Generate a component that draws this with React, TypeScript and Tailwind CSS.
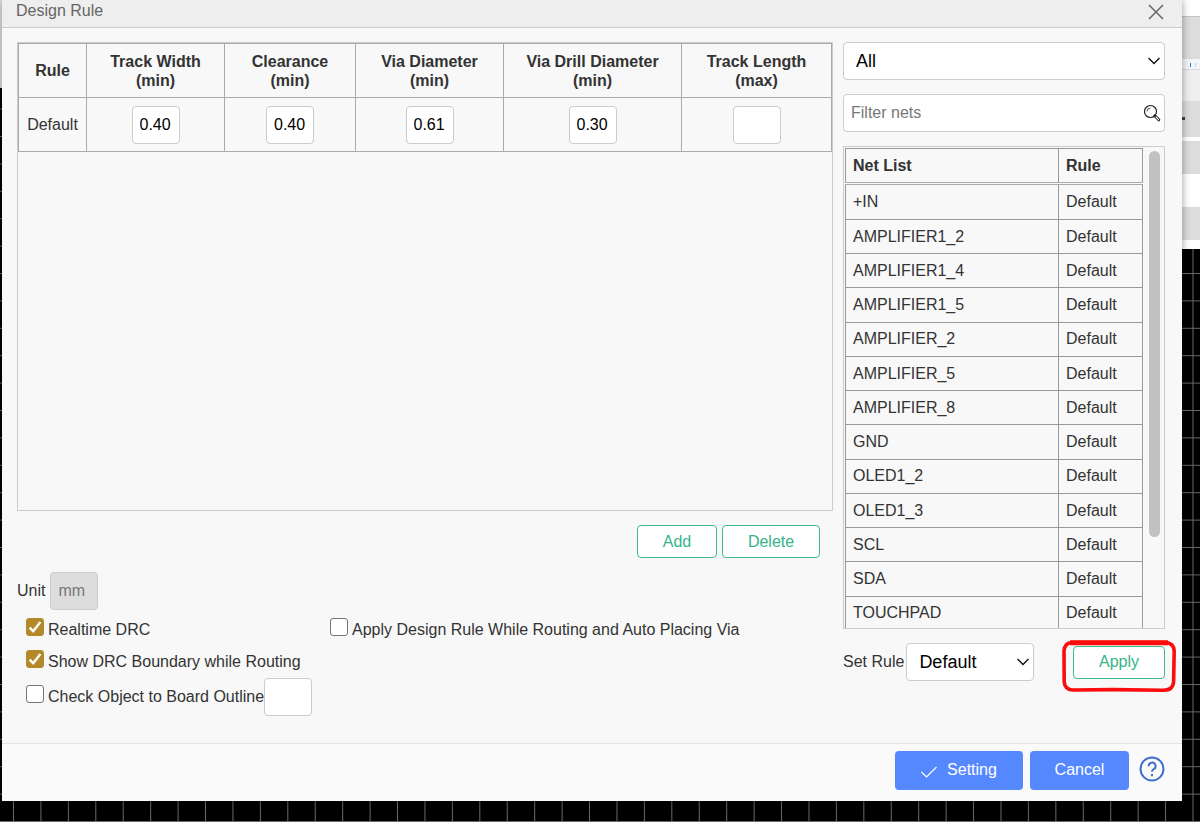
import { ComponentProps, useState } from "react";
import { clsx } from "clsx";

const columns = [
	{ title: "Track Width", bound: "min", value: "0.40" },
	{ title: "Clearance", bound: "min", value: "0.40" },
	{ title: "Via Diameter", bound: "min", value: "0.61" },
	{ title: "Via Drill Diameter", bound: "min", value: "0.30" },
	{ title: "Track Length", bound: "max", value: "" },
];

const nets = [
	"+IN",
	"AMPLIFIER1_2",
	"AMPLIFIER1_4",
	"AMPLIFIER1_5",
	"AMPLIFIER_2",
	"AMPLIFIER_5",
	"AMPLIFIER_8",
	"GND",
	"OLED1_2",
	"OLED1_3",
	"SCL",
	"SDA",
	"TOUCHPAD",
];

function Backdrop() {
	return (
		<div
			aria-hidden="true"
			className="absolute inset-0 overflow-hidden bg-black"
		>
			<svg className="size-full" stroke="#6a6a6a" strokeWidth="1">
				<defs>
					<pattern
						id="grid"
						x="13"
						y="-1"
						width="27.43"
						height="27.4"
						patternUnits="userSpaceOnUse"
					>
						<path d="M0.5 0v27.4M0 0.5h27.43" fill="none" />
					</pattern>
				</defs>
				<rect width="100%" height="100%" fill="url(#grid)" stroke="none" />
			</svg>
			<div className="absolute top-0 left-0 h-[88px] w-1 bg-[#e4e4e4]" />
			<div className="absolute top-0 right-0 flex h-[249px] w-6 flex-col bg-white pt-4">
				<div className="h-[43px] border-t border-[#c4c4c4] bg-[#dcdcdc]" />
				<div className="flex h-[11px] justify-end gap-1 border-b border-[#d5dbe2] bg-[#f4f6f9] pt-1 pr-1">
					<span className="h-1 w-px bg-[#2f7fc4]" />
					<span className="h-1 w-px bg-[#c3d5e6]" />
				</div>
				<div className="h-[31px] bg-[#efefef]" />
				<div className="h-9 bg-[#dcdcdc] pt-4 pl-1.5">
					<span className="block h-[3px] w-[3px] bg-[#444]" />
				</div>
				<div className="mt-1 h-[33px] bg-[#dcdcdc]" />
				<div className="mt-[33px] h-[33px] bg-[#dcdcdc]" />
			</div>
		</div>
	);
}

function TextBox({ className, ...props }: ComponentProps<"input">) {
	return (
		<input
			type="text"
			className={clsx(
				"h-[38px] rounded-[4px] border border-[#ccc] px-[7px] outline-none",
				className
			)}
			{...props}
		/>
	);
}

function Dropdown({
	options,
	className,
	...props
}: ComponentProps<"select"> & { options: string[] }) {
	return (
		<div className={clsx("grid items-center", className)}>
			<select
				className="col-start-1 row-start-1 h-[38px] w-full appearance-none rounded-[4px] border border-[#ccc] bg-white pl-3 text-[18px] text-black"
				{...props}
			>
				{options.map((option) => (
					<option key={option}>{option}</option>
				))}
			</select>
			<svg
				viewBox="0 0 12 8"
				className="pointer-events-none col-start-1 row-start-1 mr-[5px] h-2 w-3 justify-self-end"
				fill="none"
				stroke="#111"
				strokeWidth="1.4"
			>
				<path d="M0.5 1 6 6.6 11.5 1" />
			</svg>
		</div>
	);
}

function Check({
	label,
	initial = false,
}: {
	label: string;
	initial?: boolean;
}) {
	const [checked, setChecked] = useState(initial);

	return (
		<label className="flex items-center gap-1">
			<span className="mb-1.5 grid">
				<input
					type="checkbox"
					checked={checked}
					onChange={(e) => setChecked(e.target.checked)}
					className="peer col-start-1 row-start-1 size-[18px] appearance-none rounded-[3px] border border-[#767676] bg-white checked:border-[#b3892a] checked:bg-[#b3892a]"
				/>
				<svg
					viewBox="0 0 18 18"
					className="pointer-events-none invisible col-start-1 row-start-1 size-[18px] peer-checked:visible"
					fill="none"
					stroke="#fff"
					strokeWidth="2.4"
				>
					<path d="M3.6 9.6 7.2 13.2 14.4 4" />
				</svg>
			</span>
			{label}
		</label>
	);
}

function OutlineButton({ className, ...props }: ComponentProps<"button">) {
	return (
		<button
			type="button"
			className={clsx(
				"h-[33px] rounded-[4px] border border-[#3dba8c] bg-white text-[#35b488]",
				className
			)}
			{...props}
		/>
	);
}

function RuleTable() {
	return (
		<div className="h-[469px] border border-[#ccc]">
			<table className="w-full table-fixed border-collapse">
				<colgroup>
					<col className="w-[68px]" />
					<col className="w-[138px]" />
					<col className="w-[131px]" />
					<col className="w-[148px]" />
					<col className="w-[178px]" />
					<col className="w-[150px]" />
				</colgroup>
				<thead>
					<tr className="h-[54px]">
						<th className="border border-[#aaa] p-0">Rule</th>
						{columns.map(({ title, bound }) => (
							<th
								key={title}
								className="border border-[#aaa] p-0 leading-[19px]"
							>
								{title}
								<br />({bound})
							</th>
						))}
					</tr>
				</thead>
				<tbody>
					<tr className="h-[54px]">
						<td className="border border-[#aaa] p-0 text-center">
							Default
						</td>
						{columns.map(({ title, value }) => (
							<td key={title} className="border border-[#aaa] p-0">
								<TextBox
									aria-label={title}
									defaultValue={value}
									className="mx-auto block w-12 bg-white text-black"
								/>
							</td>
						))}
					</tr>
				</tbody>
			</table>
		</div>
	);
}

function NetTable() {
	return (
		<div className="flex h-[483px] items-start overflow-hidden border border-[#ccc] pt-px pl-px">
			<table className="h-[483px] flex-1 table-fixed border-collapse text-left">
				<colgroup>
					<col />
					<col className="w-[84px]" />
				</colgroup>
				<thead>
					<tr className="h-[35px] border-b-3 border-double border-[#aaa]">
						<th className="border border-b-0 border-[#999] py-0 pl-[7px]">
							Net List
						</th>
						<th className="border border-b-0 border-[#999] py-0 pl-[7px]">
							Rule
						</th>
					</tr>
				</thead>
				<tbody>
					{nets.map((net) => (
						<tr key={net}>
							<td className="border border-[#999] py-0 pl-[7px]">{net}</td>
							<td className="border border-[#999] py-0 pl-[7px]">
								Default
							</td>
						</tr>
					))}
				</tbody>
			</table>
			<div className="w-[21px] pt-[3px] pr-1 pl-1.5">
				<div className="h-[386px] rounded-full bg-[#c1c1c1]" />
			</div>
		</div>
	);
}

export default function App() {
	return (
		<div className="relative min-h-screen font-['Liberation_Sans',Arial,sans-serif] text-[16px] leading-5 text-[#333]">
			<Backdrop />
			<div
				role="dialog"
				aria-labelledby="title"
				className="relative mr-[18px] ml-0.5 bg-[#f8f8f8] shadow-[0_0_8px_rgba(0,0,0,0.4)]"
			>
				<header className="flex h-7 items-start justify-between border-b border-[#ccc] bg-[#eee] pr-[18px] pl-3.5 text-[#666]">
					<h1 id="title" className="pt-px">
						Design Rule
					</h1>
					<button type="button" aria-label="Close" className="pt-1">
						<svg
							viewBox="0 0 16 16"
							className="size-4"
							stroke="#666"
							strokeWidth="1.5"
						>
							<path d="M1 1 15 15M15 1 1 15" />
						</svg>
					</button>
				</header>

				<main className="flex h-[715px] gap-2.5 pt-3.5 pr-[17px] pl-[15px]">
					<section className="min-w-0 flex-1">
						<RuleTable />
						<div className="flex justify-end gap-[5px] pt-3.5 pr-[13px]">
							<OutlineButton className="w-20">Add</OutlineButton>
							<OutlineButton className="w-[98px]">Delete</OutlineButton>
						</div>
						<label className="mt-3.5 flex items-center gap-[5px]">
							Unit
							<TextBox
								defaultValue="mm"
								disabled
								className="w-12 bg-[#ddd] text-[#777]"
							/>
						</label>
						<div className="flex pt-2 pl-[9px]">
							<div className="w-[304px]">
								<Check label="Realtime DRC" initial />
								<div className="pt-2 pb-1">
									<Check label="Show DRC Boundary while Routing" initial />
								</div>
								<div className="flex items-center">
									<Check label="Check Object to Board Outline" />
									<TextBox
										aria-label="Board outline clearance"
										className="w-12 bg-white"
									/>
								</div>
							</div>
							<div>
								<Check label="Apply Design Rule While Routing and Auto Placing Via" />
							</div>
						</div>
					</section>

					<section className="flex w-[322px] flex-col">
						<Dropdown
							aria-label="Net class"
							options={["All"]}
							className="mb-3.5"
						/>
						<div className="mb-3.5 grid items-center">
							<TextBox
								type="search"
								aria-label="Filter nets"
								placeholder="Filter nets"
								className="col-start-1 row-start-1 w-full bg-white placeholder:text-[#777]"
							/>
							<svg
								viewBox="0 0 18 18"
								className="pointer-events-none col-start-1 row-start-1 mr-1 size-[18px] justify-self-end"
								fill="none"
								stroke="#222"
							>
								<circle cx="7.5" cy="7.5" r="6" strokeWidth="1.2" />
								<path d="M4 7.4A3.5 3.5 0 0 1 7.4 4" strokeWidth="0.8" />
								<path d="M11.8 11.8 15.8 15.8" strokeWidth="3" strokeLinecap="round" />
								<path d="M13 13 15.6 15.6" stroke="#fff" strokeWidth="1.1" strokeLinecap="round" />
							</svg>
						</div>
						<NetTable />
						<div className="flex items-center pt-3.5">
							<label htmlFor="set-rule">Set Rule</label>
							<Dropdown
								id="set-rule"
								options={["Default"]}
								className="ml-0.5 w-32"
							/>
							<div className="relative ml-auto">
								<OutlineButton className="block w-[92px]">
									Apply
								</OutlineButton>
								<svg
									viewBox="0 0 116 54"
									className="pointer-events-none absolute -top-[7px] -left-3 h-[54px] w-[116px]"
									fill="none"
									stroke="#fb0d0d"
									strokeLinejoin="round"
								>
									<path
										d="M11 3.5H104Q113 4 113.200 12L112.600 43Q112 51 103 51.200L52 50.600 12 51Q4 51 3.200 43L3 12Q3.500 4 11 3.500Z"
										strokeWidth="3.6"
									/>
									<path d="M9 3.800H107" strokeWidth="5" />
								</svg>
							</div>
						</div>
					</section>
				</main>

				<footer className="flex h-[58px] items-start justify-end border-t border-[#e6e6e6] bg-[#fafafa] pt-[7px] pr-[17px] text-white">
					<button
						type="button"
						className="flex h-[39px] w-32 items-center justify-center gap-2.5 rounded-[4px] bg-[#5588ff] pb-0.5"
					>
						<svg
							viewBox="0 0 16 12"
							className="mt-1 h-3 w-4"
							fill="none"
							stroke="currentColor"
							strokeWidth="1.2"
						>
							<path d="M0.500 6 5.500 11 15.500 1" />
						</svg>
						Setting
					</button>
					<button
						type="button"
						className="ml-[7px] h-[39px] w-[99px] rounded-[4px] bg-[#5588ff] pb-0.5"
					>
						Cancel
					</button>
					<button type="button" aria-label="Help" className="mt-[5px] ml-2.5">
						<svg
							viewBox="0 0 26 26"
							className="size-[26px]"
							fill="none"
							stroke="#3f70d0"
							strokeWidth="2"
						>
							<circle cx="13" cy="13" r="11.500" />
							<path d="M9.600 10.400A3.500 3.500 0 1 1 14.800 13.200Q13 14.200 13 15.800" />
							<path d="M13 18v2.200" />
						</svg>
					</button>
				</footer>
			</div>
		</div>
	);
}
